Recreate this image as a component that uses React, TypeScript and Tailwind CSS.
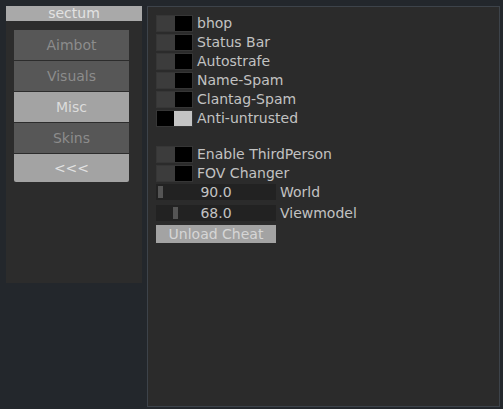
import React from 'react';

const font = { fontFamily: '"DejaVu Sans", "Liberation Sans", sans-serif' };

const tabs = [
  { name: 'Aimbot', active: false },
  { name: 'Visuals', active: false },
  { name: 'Misc', active: true },
  { name: 'Skins', active: false },
];

const Toggle: React.FC<{ label: string; on?: boolean }> = ({ label, on }) => (
  <div className="flex items-center h-[17px] gap-[4px]">
    <div className={`w-[37px] h-[17px] border border-[#363636] bg-black flex ${on ? 'justify-end' : 'justify-start'}`}>
      <div className={`w-[18px] h-full ${on ? 'bg-[#c4c4c4]' : 'bg-[#3c3c3c]'}`} />
    </div>
    <span className="text-[14px] leading-[17px] text-[#c2c2c2]">{label}</span>
  </div>
);

const Slider: React.FC<{ label: string; value: string; pos: number }> = ({ label, value, pos }) => (
  <div className="flex items-center h-[16px] gap-[4px]">
    <div className="relative w-[120px] h-[16px] bg-[#222222] flex items-center justify-center">
      <div className="absolute top-[2px] w-[5px] h-[12px] bg-[#555555]" style={{ left: pos }} />
      <span className="text-[14px] leading-[16px] text-[#c2c2c2]">{value}</span>
    </div>
    <span className="text-[14px] leading-[16px] text-[#c2c2c2]">{label}</span>
  </div>
);

export default function App() {
  return (
    <div className="w-[503px] h-[409px] bg-[#23272c] pt-[6px] pl-[6px] flex gap-[5px]" style={font}>
      <div className="w-[136px] flex flex-col">
        <div className="h-[15px] bg-[#a9a9a9] text-[#e2e2e2] text-[14px] leading-[15px] text-center">sectum</div>
        <div className="h-[262px] bg-[#2c2c2c] pl-[8px] pr-[13px] pt-[9px] flex flex-col gap-[1px]">
          {tabs.map((t) => (
            <div
              key={t.name}
              className={`h-[30px] flex items-center justify-center text-[14px] ${t.active ? 'bg-[#a3a3a3] text-[#dcdcdc]' : 'bg-[#575757] text-[#8c8c8c]'}`}
            >
              {t.name}
            </div>
          ))}
          <div className="h-[28px] flex items-center justify-center text-[14px] bg-[#a3a3a3] text-[#e2e2e2] rounded-b-[2px]">
            &lt;&lt;&lt;
          </div>
        </div>
      </div>
      <div className="w-[353px] h-[401px] bg-[#2b2b2b] border border-[#3d434a] pl-[8px] pt-[8px] flex flex-col gap-[2px]">
        <Toggle label="bhop" />
        <Toggle label="Status Bar" />
        <Toggle label="Autostrafe" />
        <Toggle label="Name-Spam" />
        <Toggle label="Clantag-Spam" />
        <Toggle label="Anti-untrusted" on />
        <div className="h-[15px]" />
        <Toggle label="Enable ThirdPerson" />
        <Toggle label="FOV Changer" />
        <Slider label="World" value="90.0" pos={2} />
        <div className="h-[3px] -mt-[2px]" />
        <Slider label="Viewmodel" value="68.0" pos={17} />
        <div className="mt-[2px] w-[120px] h-[18px] bg-[#a3a3a3] text-[#d6d6d6] text-[14px] leading-[18px] text-center">
          Unload Cheat
        </div>
      </div>
    </div>
  );
}
